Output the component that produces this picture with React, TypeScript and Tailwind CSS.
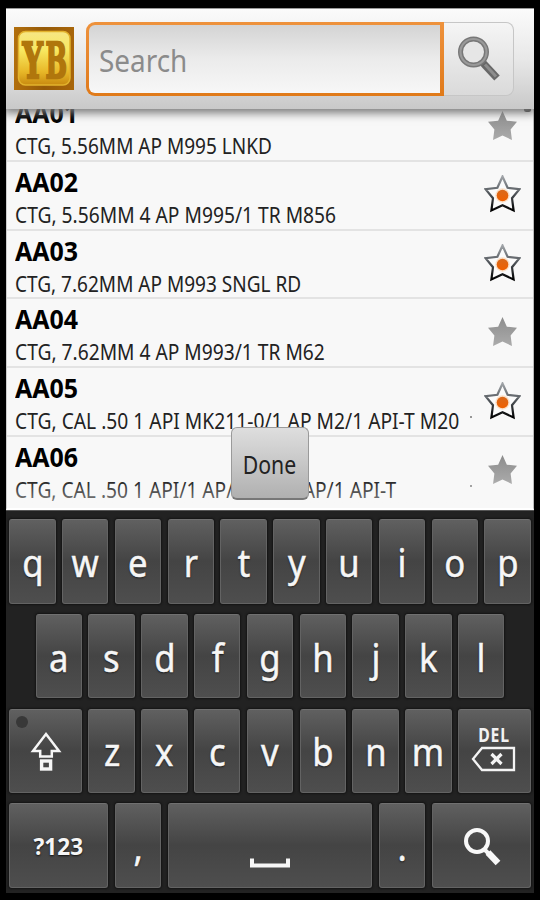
import React from "react";

type Entry = { code: string; text: string; starred: boolean; fit: string; speck?: boolean };

const entries: Entry[] = [
  { code: "AA01", text: "CTG, 5.56MM AP M995 LNKD", starred: false, fit: "scale-x-[0.885]" },
  { code: "AA02", text: "CTG, 5.56MM 4 AP M995/1 TR M856", starred: true, fit: "scale-x-[0.894]" },
  { code: "AA03", text: "CTG, 7.62MM AP M993 SNGL RD", starred: true, fit: "scale-x-[0.885]" },
  { code: "AA04", text: "CTG, 7.62MM 4 AP M993/1 TR M62", starred: false, fit: "scale-x-[0.893]" },
  { code: "AA05", text: "CTG, CAL .50 1 API MK211-0/1 AP M2/1 API-T M20", starred: true, fit: "scale-x-[0.895]", speck: true },
  { code: "AA06", text: "CTG, CAL .50 1 API/1 AP/1 API/1 AP/1 API-T", starred: false, fit: "scale-x-[0.892]", speck: true },
];

const STAR = "M18.5 1.5 L23.6 12.8 L35.5 14.2 L28 23.2 L29.6 35.5 L18.5 30.3 L7.4 35.5 L9 23.2 L1.5 14.2 L13.4 12.8 Z";

function GrayStar() {
  return (
    <svg viewBox="1.5 1.5 34 34" className="-mt-[2px] h-[29px] w-[29px]" preserveAspectRatio="none">
      <defs>
        <linearGradient id="grayStar" x1="0" y1="0" x2="0" y2="1">
          <stop offset="0" stopColor="#8c8c8c" />
          <stop offset="1" stopColor="#ababab" />
        </linearGradient>
      </defs>
      <path d={STAR} fill="url(#grayStar)" />
    </svg>
  );
}

function OrangeStar() {
  return (
    <svg viewBox="0 0 37 38" className="-mt-[2px] h-[38px] w-[37px]">
      <defs>
        <linearGradient id="starEdge" x1="0" y1="0" x2="0" y2="1">
          <stop offset="0" stopColor="#a0a4a8" />
          <stop offset="0.5" stopColor="#50555a" />
          <stop offset="1" stopColor="#000" />
        </linearGradient>
        <linearGradient id="starDot" x1="0" y1="0" x2="0" y2="1">
          <stop offset="0" stopColor="#d9691c" />
          <stop offset="1" stopColor="#f06000" />
        </linearGradient>
      </defs>
      <path d={STAR} fill="#fbfbfb" stroke="url(#starEdge)" strokeWidth="2.2" />
      <circle cx="18.5" cy="20.5" r="7.2" fill="#fbe0c8" />
      <circle cx="18.5" cy="20.5" r="5.8" fill="url(#starDot)" />
    </svg>
  );
}

function Row({ entry }: { entry: Entry }) {
  return (
    <div className="flex h-[68.8px] shrink-0 border-b-2 border-[#e3e3e3] pl-[8px] last:border-transparent">
      <div className="w-[461px] shrink-0 pt-[2px] whitespace-nowrap">
        <div className="h-[36px] w-fit origin-left scale-x-[0.96] text-[26px] leading-[36px] font-bold text-black">{entry.code}</div>
        <div className={`mt-[1px] h-[28px] w-fit origin-left text-[21.5px] leading-[28px] text-[#222] ${entry.fit}`}>{entry.text}</div>
      </div>
      <div className="-ml-[6px] w-[2px] pt-[48px]">
        {entry.speck && <div className="h-[2px] w-[2px] rounded-full bg-[#777]" />}
      </div>
      <div className="flex w-[62px] items-center justify-center">
        {entry.starred ? <OrangeStar /> : <GrayStar />}
      </div>
    </div>
  );
}

function Key({ span, children }: { span: string; children: React.ReactNode }) {
  return (
    <div className={`${span} flex px-[3.15px]`}>
      <div className="flex h-[84.3px] w-full items-center justify-center rounded-[3px] border border-[#636363] border-t-[#707070] bg-linear-to-b from-[#606060] via-[#444444] via-50% to-[#4e4e4e] shadow-[0_0_2px_1px_#141414]">
        {children}
      </div>
    </div>
  );
}

function Letter({ c }: { c: string }) {
  return (
    <Key span="col-span-2">
      <span className="mt-[1px] scale-x-[0.9] text-[38.5px] leading-[84px] text-[#f6f6f6] [-webkit-text-stroke:0.5px_#f6f6f6] [text-shadow:0_1px_2px_#111]">{c}</span>
    </Key>
  );
}

function KeyRow({ children }: { children: React.ReactNode }) {
  return <div className="grid h-[94.7px] shrink-0 grid-cols-20">{children}</div>;
}

function Logo() {
  return (
    <svg viewBox="0 0 60 63" className="h-[63px] w-[60px]">
      <defs>
        <linearGradient id="gold" x1="0" y1="0" x2="0" y2="1">
          <stop offset="0" stopColor="#f6e684" />
          <stop offset="0.35" stopColor="#f8e860" />
          <stop offset="0.75" stopColor="#e8b828" />
          <stop offset="1" stopColor="#c88a10" />
        </linearGradient>
        <linearGradient id="goldEdge" x1="0" y1="0" x2="1" y2="0">
          <stop offset="0" stopColor="#b26f0c" />
          <stop offset="0.5" stopColor="#955a08" />
          <stop offset="1" stopColor="#a8660a" />
        </linearGradient>
      </defs>
      <rect width="60" height="63" fill="url(#goldEdge)" />
      <rect x="4.5" y="4.5" width="51.5" height="53.5" rx="7" fill="url(#gold)" stroke="#e2b22c" strokeWidth="1.5" />
      <g fontFamily="'DejaVu Serif', serif" fontWeight="700" fontSize="49" fill="#b0760c" stroke="#b0760c" strokeWidth="2.4">
        <text x="8.5" y="50.5" textLength="20.5" lengthAdjust="spacingAndGlyphs">Y</text>
        <text x="31.5" y="50.5" textLength="21.5" lengthAdjust="spacingAndGlyphs">B</text>
      </g>
    </svg>
  );
}

export default function App() {
  return (
    <div className="h-[900px] w-[540px] overflow-hidden bg-black pt-[8px] pl-[6px] font-['Noto_Sans','Open_Sans',sans-serif]">
      <div className="relative flex h-[885px] w-[528px] flex-col overflow-hidden bg-[#222]">
        <header className="relative z-10 flex h-[101px] shrink-0 items-start border-t border-[#999] bg-linear-to-b from-[#fbfbfb] via-[#e8e8e8] to-[#c9c9c9] pt-[13px] pl-[8px] shadow-[0_2px_9px_2px_#777]">
          <div className="mt-[5px]"><Logo /></div>
          <div className="ml-[12px] flex h-[74px] w-[358px] rounded-l-[9px] bg-linear-to-b from-[#ee923c] to-[#e07a18] p-[3px] pr-[4px]">
            <div className="flex w-full items-center rounded-l-[6px] bg-linear-to-b from-[#d4d4d4] via-[#ebebeb] via-50% to-[#f7f7f7] pl-[10px]">
              <span className="mt-[1px] origin-left scale-x-[0.9] text-[31px] leading-[60px] text-[#8b8b8b]">Search</span>
            </div>
          </div>
          <div className="flex h-[74px] w-[70px] items-center justify-center rounded-r-[8px] border border-l-0 border-[#c6c6c6] bg-linear-to-b from-[#f5f5f5] to-[#dadada]">
            <svg viewBox="0 0 46 48" className="h-[48px] w-[46px]">
              <path d="M27 28 L41 43" stroke="#686868" strokeWidth="7.5" />
              <path d="M29 29.5 L40 41.5" stroke="#8d8d8d" strokeWidth="3" />
              <circle cx="17.5" cy="17" r="13" fill="#e6e6e6" stroke="#777" strokeWidth="5" />
              <circle cx="17.5" cy="17" r="13" fill="none" stroke="#999" strokeWidth="2.2" />
            </svg>
          </div>
        </header>

        <main className="relative h-[401px] shrink-0 overflow-hidden border-r border-b-2 border-l border-white border-r-[#bbb] border-l-[#ccc] bg-[#f8f8f8]">
          <div className="-mt-[16px] flex flex-col">
            {entries.map((e) => <Row key={e.code} entry={e} />)}
          </div>
          <div className="absolute inset-x-0 bottom-0 h-[28px] bg-linear-to-b from-[#f8f8f800] to-[#f8f8f888]" />
          <div className="absolute top-[-2px] right-[2px] h-[5px] w-[7px] rounded-full bg-[#333]" />
        </main>

        <button className="absolute top-[419px] left-[225px] z-20 flex h-[73px] w-[78px] items-center justify-center rounded-[6px] border border-[#9a9a9a] border-b-2 border-b-[#777] bg-linear-to-b from-[#dedede] via-[#cccccc] via-40% to-[#b0b0b0]">
          <span className="mt-[1px] -ml-[1px] scale-x-[0.85] text-[25px] leading-[60px] text-[#222]">Done</span>
        </button>

        <section className="flex w-[528px] shrink-0 flex-col border-t border-[#555] pt-[8.4px]">
          <KeyRow>{"qwertyuiop".split("").map((c) => <Letter key={c} c={c} />)}</KeyRow>
          <KeyRow>
            <div />
            {"asdfghjkl".split("").map((c) => <Letter key={c} c={c} />)}
          </KeyRow>
          <KeyRow>
            <div className="relative col-span-3 grid">
              <Key span="col-span-1">
                <svg viewBox="0 0 32 40" className="h-[40px] w-[32px]" fill="none" stroke="#f6f6f6" strokeWidth="2.5">
                  <path d="M16 3 L29 20 H21.8 V25.5 H10.2 V20 H3 Z" />
                  <rect x="11.6" y="30" width="9" height="8" strokeWidth="3.4" />
                </svg>
              </Key>
              <div className="absolute top-[7px] left-[10px] h-[12px] w-[12px] rounded-full bg-[#383838]" />
            </div>
            {"zxcvbnm".split("").map((c) => <Letter key={c} c={c} />)}
            <Key span="col-span-3">
              <div className="-mt-[4px] flex flex-col items-center">
                <span className="scale-x-[0.83] text-[19px] leading-[20px] font-bold tracking-[1px] text-[#f2f2f2]">DEL</span>
                <svg viewBox="0 0 46 26" className="mt-[1px] -ml-[2px] h-[26px] w-[46px]" fill="none" stroke="#f4f4f4">
                  <path d="M3 13 L12 2 H44 V24 H12 Z" strokeWidth="2.3" />
                  <path d="M21.5 8 L31.5 18 M31.5 8 L21.5 18" strokeWidth="3.2" />
                </svg>
              </div>
            </Key>
          </KeyRow>
          <KeyRow>
            <Key span="col-span-4">
              <span className="mt-[1px] scale-x-[0.94] text-[24px] leading-[84px] font-bold text-[#f6f6f6] [text-shadow:0_1px_2px_#111]">?123</span>
            </Key>
            <Letter c="," />
            <Key span="col-span-8">
              <svg viewBox="0 0 42 12" className="mt-[35px] h-[12px] w-[42px]" fill="none" stroke="#f6f6f6" strokeWidth="4">
                <path d="M3 1.5 V8.5 H39 V1.5" />
              </svg>
            </Key>
            <Letter c="." />
            <Key span="col-span-4">
              <svg viewBox="0 0 40 42" className="mt-[1px] ml-[2px] h-[42px] w-[40px]" fill="none" stroke="#f8f8f8">
                <circle cx="15" cy="16" r="11" strokeWidth="4" />
                <path d="M23 25 L27 29" strokeWidth="4" />
                <path d="M26 27.5 L36 38" strokeWidth="6.5" />
              </svg>
            </Key>
          </KeyRow>
        </section>
      </div>
    </div>
  );
}
